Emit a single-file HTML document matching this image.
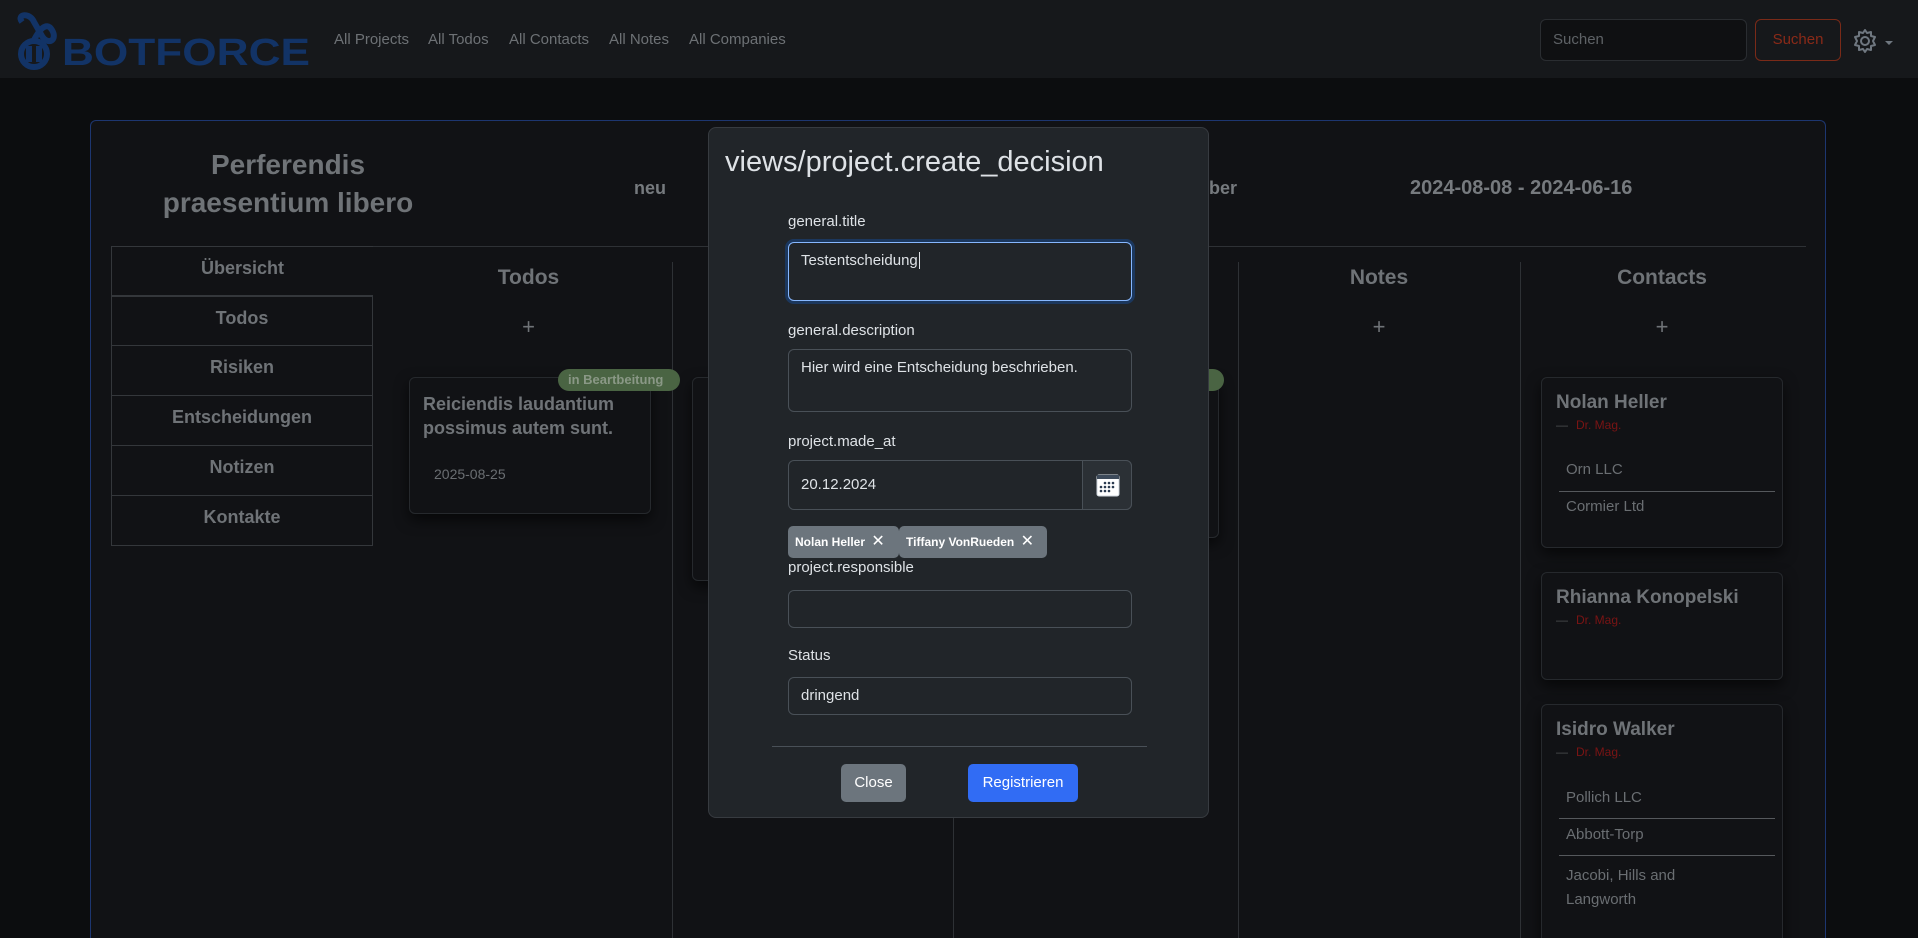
<!DOCTYPE html>
<html><head><meta charset="utf-8">
<style>
*{box-sizing:border-box;margin:0;padding:0}
html{width:1918px;height:938px;overflow:hidden}
body{width:1918px;height:938px;overflow:hidden;background:#0c0d0f;font-family:"Liberation Sans",sans-serif;position:relative}
.abs{position:absolute}
.nav{left:0;top:0;width:1918px;height:78px;background:#16181b}
.navlink{top:31px;font-size:15px;color:#6d7175}
.card{left:90px;top:120px;width:1736px;height:818px;border:1px solid #1d3670;border-bottom:none;border-radius:6px 6px 0 0;background:#111215}
.g{color:#767a7e}
.side{left:111px;width:262px;height:50px;border:1px solid #34373b;border-top:none;text-align:center;font-size:18px;font-weight:bold;color:#6f7377;line-height:42px}
.vl{width:1px;background:#2e3135;top:262px;height:676px}
.ch{font-size:21px;font-weight:bold;color:#6f7377;text-align:center;top:266px}
.plus{font-size:22px;color:#6f7377;text-align:center;top:314px}
.tc{background:#111215;border:1px solid #26292d;border-radius:6px;box-shadow:0 6px 14px rgba(0,0,0,.6)}
.badge{background:#4a6443;color:#8a9886;font-size:13px;font-weight:bold;border-radius:11px;height:22px;line-height:22px;padding:0 10px}
.cn{font-size:19px;font-weight:bold;color:#6f7377;left:14px}
.dr{font-size:12px;color:#7a1414;left:14px}
.dr span{color:#4a4d50;margin-right:8px}
.co{left:24px;font-size:15px;color:#6a6e72}
.sep{left:17px;width:216px;height:1px;background:#55585c}
.modal{left:708px;top:127px;width:501px;height:691px;background:#212529;border:1px solid #373b40;border-radius:8px}
.lbl{left:79px;font-size:15px;color:#dee2e6}
.inp{left:79px;width:344px;border:1px solid #495057;border-radius:6px;background:#212529;font-size:15px;color:#dee2e6;padding-left:12px}
.chip{top:398px;height:32px;background:#6c757d;border-radius:5px;color:#fff;font-weight:bold;font-size:12px;line-height:32px;padding-left:7px}
</style></head><body>
<div class="abs nav"></div>
<svg class="abs" style="left:8px;top:10px" width="305" height="60" viewBox="0 0 305 60">
 <g fill="none" stroke="#123366" stroke-width="6">
  <path d="M14 12 C8 4 22 2 26 12 L34 26 C40 36 50 30 44 20 C38 10 30 22 26 30"/>
  <circle cx="26" cy="44" r="13"/>
  <path d="M21 36 V52 M31 36 V52"/>
 </g>
 <text x="54" y="55" font-family="Liberation Sans" font-weight="bold" font-size="38" fill="#123366" textLength="248" lengthAdjust="spacingAndGlyphs">BOTFORCE</text>
</svg>
<div class="abs navlink" style="left:334px">All Projects</div>
<div class="abs navlink" style="left:428px">All Todos</div>
<div class="abs navlink" style="left:509px">All Contacts</div>
<div class="abs navlink" style="left:609px">All Notes</div>
<div class="abs navlink" style="left:689px">All Companies</div>
<div class="abs" style="left:1540px;top:19px;width:207px;height:42px;border:1px solid #2a2d31;border-radius:6px;background:#0f1012;color:#5e6266;font-size:15px;line-height:40px;padding-left:12px">Suchen</div>
<div class="abs" style="left:1755px;top:19px;width:86px;height:42px;border:1px solid #7a2a18;border-radius:6px;color:#8a2a18;font-size:15px;line-height:40px;text-align:center">Suchen</div>
<svg class="abs" style="left:1852px;top:28px" width="48" height="26" viewBox="0 0 48 26">
 <circle cx="13" cy="13" r="4" fill="none" stroke="#6f7780" stroke-width="2"/>
 <path d="M13 2 L15 5 L19 4 L19 8 L23 9 L21 13 L23 17 L19 18 L19 22 L15 21 L13 24 L11 21 L7 22 L7 18 L3 17 L5 13 L3 9 L7 8 L7 4 L11 5 Z" fill="none" stroke="#6f7780" stroke-width="2" stroke-linejoin="round"/>
 <path d="M33 13 L41 13 L37 17 Z" fill="#6f7780"/>
</svg>

<div class="abs card"></div>
<div class="abs g" style="left:120px;top:146px;width:336px;text-align:center;font-size:28px;line-height:38px;font-weight:bold;color:#6f7377">Perferendis<br>praesentium libero</div>
<div class="abs g" style="left:634px;top:178px;font-size:18px;font-weight:bold">neu</div>
<div class="abs g" style="left:1202px;top:178px;font-size:18px;font-weight:bold">rber</div>
<div class="abs g" style="left:1410px;top:177px;font-size:20px;font-weight:bold">2024-08-08 - 2024-06-16</div>
<div class="abs" style="left:111px;top:246px;width:1695px;height:1px;background:#2e3135"></div>
<div class="abs side" style="top:246px;border-top:1px solid #34373b;border-right:none">Übersicht</div>
<div class="abs side" style="top:296px;border-top:1px solid #34373b">Todos</div>
<div class="abs side" style="top:346px">Risiken</div>
<div class="abs side" style="top:396px">Entscheidungen</div>
<div class="abs side" style="top:446px">Notizen</div>
<div class="abs side" style="top:496px">Kontakte</div>
<div class="abs" style="left:372px;top:296px;width:1px;height:250px;background:#34373b"></div>

<div class="abs vl" style="left:672px"></div>
<div class="abs vl" style="left:953px"></div>
<div class="abs vl" style="left:1238px"></div>
<div class="abs vl" style="left:1520px"></div>
<div class="abs ch" style="left:385px;width:287px">Todos</div>
<div class="abs plus" style="left:385px;width:287px">+</div>
<div class="abs ch" style="left:1238px;width:282px">Notes</div>
<div class="abs plus" style="left:1238px;width:282px">+</div>
<div class="abs ch" style="left:1520px;width:284px">Contacts</div>
<div class="abs plus" style="left:1520px;width:284px">+</div>

<div class="abs tc" style="left:409px;top:377px;width:242px;height:137px">
 <div class="abs" style="left:13px;top:14px;font-size:18px;font-weight:bold;color:#6f7377;line-height:24px;width:220px">Reiciendis laudantium possimus autem sunt.</div>
 <div class="abs" style="left:24px;top:88px;font-size:14px;color:#6a6e72">2025-08-25</div>
</div>
<div class="abs badge" style="left:558px;top:369px;width:122px">in Beartbeitung</div>
<div class="abs tc" style="left:692px;top:377px;width:240px;height:204px"></div>
<div class="abs tc" style="left:980px;top:377px;width:239px;height:161px"></div>
<div class="abs badge" style="left:1180px;top:369px;width:44px"></div>

<div class="abs tc" style="left:1541px;top:377px;width:242px;height:171px">
 <div class="abs cn" style="top:14px">Nolan Heller</div>
 <div class="abs dr" style="top:40px"><span>—</span>Dr. Mag.</div>
 <div class="abs co" style="top:83px">Orn LLC</div>
 <div class="abs sep" style="top:113px"></div>
 <div class="abs co" style="top:120px">Cormier Ltd</div>
</div>
<div class="abs tc" style="left:1541px;top:572px;width:242px;height:108px">
 <div class="abs cn" style="top:14px">Rhianna Konopelski</div>
 <div class="abs dr" style="top:40px"><span>—</span>Dr. Mag.</div>
</div>
<div class="abs tc" style="left:1541px;top:704px;width:242px;height:240px">
 <div class="abs cn" style="top:14px">Isidro Walker</div>
 <div class="abs dr" style="top:40px"><span>—</span>Dr. Mag.</div>
 <div class="abs co" style="top:84px">Pollich LLC</div>
 <div class="abs sep" style="top:113px"></div>
 <div class="abs co" style="top:121px">Abbott-Torp</div>
 <div class="abs sep" style="top:150px"></div>
 <div class="abs co" style="top:159px;line-height:24px">Jacobi, Hills and<br>Langworth</div>
</div>

<div class="abs modal">
 <div class="abs" style="left:16px;top:18px;font-size:29px;color:#dee2e6">views/project.create_decision</div>
 <div class="abs lbl" style="top:85px">general.title</div>
 <div class="abs inp" style="top:114px;height:59px;border-color:#86b7fe;box-shadow:0 0 0 3px rgba(13,110,253,.25);padding-top:9px">Testentscheidung<span style="border-left:1px solid #dee2e6;margin-left:1px"></span></div>
 <div class="abs lbl" style="top:194px">general.description</div>
 <div class="abs inp" style="top:221px;height:63px;padding-top:9px">Hier wird eine Entscheidung beschrieben.</div>
 <div class="abs lbl" style="top:305px">project.made_at</div>
 <div class="abs inp" style="top:332px;height:50px;line-height:48px">20.12.2024</div>
 <div class="abs" style="left:373px;top:332px;width:50px;height:50px;border:1px solid #495057;border-radius:0 6px 6px 0;background:#2b3035"></div>
 <svg class="abs" style="left:387px;top:346px" width="24" height="23" viewBox="0 0 24 23"><rect x="1" y="1" width="22" height="21" rx="2" fill="#fff" stroke="#cfd6dd"/><rect x="1" y="1" width="22" height="4" fill="#3d4a5a"/><g fill="#2b3a4f"><circle cx="9" cy="9" r="1.3"/><circle cx="13" cy="9" r="1.3"/><circle cx="17" cy="9" r="1.3"/><circle cx="5" cy="13" r="1.3"/><circle cx="9" cy="13" r="1.3"/><circle cx="13" cy="13" r="1.3"/><circle cx="17" cy="13" r="1.3"/><circle cx="5" cy="17" r="1.3"/><circle cx="9" cy="17" r="1.3"/><circle cx="13" cy="17" r="1.3"/></g></svg>
 <div class="abs chip" style="left:79px;width:111px">Nolan Heller <span style="font-size:16px;font-weight:normal;margin-left:3px">✕</span></div>
 <div class="abs chip" style="left:190px;width:148px">Tiffany VonRueden <span style="font-size:16px;font-weight:normal;margin-left:3px">✕</span></div>
 <div class="abs lbl" style="top:431px">project.responsible</div>
 <div class="abs inp" style="top:462px;height:38px"></div>
 <div class="abs lbl" style="top:519px">Status</div>
 <div class="abs inp" style="top:549px;height:38px;line-height:36px">dringend</div>
 <div class="abs" style="left:63px;top:618px;width:375px;height:1px;background:#495057"></div>
 <div class="abs" style="left:132px;top:636px;width:65px;height:38px;background:#6c757d;border-radius:5px;color:#fff;font-size:15px;line-height:38px;text-align:center">Close</div>
 <div class="abs" style="left:259px;top:636px;width:110px;height:38px;background:#316cf4;border-radius:5px;color:#fff;font-size:15px;line-height:38px;text-align:center">Registrieren</div>
</div>
</body></html>
